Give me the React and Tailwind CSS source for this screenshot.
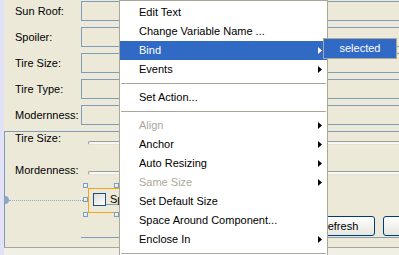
import React from 'react';

const fields = ['Sun Roof:', 'Spoiler:', 'Tire Size:', 'Tire Type:', 'Modernness:'];

const menuItems = [
  { label: 'Edit Text' },
  { label: 'Change Variable Name ...' },
  { label: 'Bind', sub: true, active: true },
  { label: 'Events', sub: true },
  { sep: true },
  { label: 'Set Action...' },
  { sep: true },
  { label: 'Align', sub: true, disabled: true },
  { label: 'Anchor', sub: true },
  { label: 'Auto Resizing', sub: true },
  { label: 'Same Size', sub: true, disabled: true },
  { label: 'Set Default Size' },
  { label: 'Space Around Component...' },
  { label: 'Enclose In', sub: true },
  { sep: true },
];

const Arrow = ({ white }) => (
  <svg width="4" height="7" viewBox="0 0 4 7" className="shrink-0">
    <polygon points="0,0 4,3.5 0,7" fill={white ? '#ffffff' : '#000000'} />
  </svg>
);

const Handle = ({ className }) => (
  <div
    className={`absolute w-[5px] h-[5px] border border-[#7F9DB9] bg-linear-to-br from-white to-[#D6DDE8] ${className}`}
  ></div>
);

const Groove = () => (
  <div className="w-[340px] shrink-0 h-[4px] border-t border-l border-[#9C9C9C] border-b border-b-[#E4E2D8] rounded-l-[2px] bg-[#F8F8F6]"></div>
);

const App = () => {
  return (
    <div className="relative w-[399px] h-[255px] overflow-hidden bg-[#ECE9D8] text-[11px] text-black font-['Liberation_Sans',Arial,sans-serif] flex">
      {/* left strip */}
      <div className="w-[4px] shrink-0 bg-[#E1E1F8]"></div>

      <div className="flex-1 flex flex-col overflow-hidden">
        {/* top form fields */}
        <div className="flex flex-col gap-[6px] pt-[1px]">
          {fields.map((f) => (
            <div key={f} className="flex items-center h-[20px]">
              <div className="w-[77px] shrink-0 pl-[11px] leading-[13px]">{f}</div>
              <div className="w-[340px] shrink-0 h-[20px] border border-[#7F9DB9]"></div>
            </div>
          ))}
        </div>

        {/* lower panel */}
        <div className="mt-[6px] h-[116px] shrink-0 border-t border-l border-[#7F9DB9] flex flex-col">
          <div className="flex items-start h-[16px]">
            <div className="w-[83px] shrink-0 pl-[10px] leading-[13px]">Tire Size:</div>
            <div className="mt-[9px]">
              <Groove />
            </div>
          </div>
          <div className="flex items-start h-[13px] mt-[16px]">
            <div className="w-[83px] shrink-0 pl-[10px] leading-[13px]">Mordenness:</div>
            <div className="mt-[7px]">
              <Groove />
            </div>
          </div>

          {/* selected component row */}
          <div className="flex items-center h-[33px] mt-[6px]">
            <div className="w-[4px] h-[8px] rounded-r-full bg-[#8FA8C8] shrink-0"></div>
            <div className="w-[74px] shrink-0 border-t border-dotted border-[#8FA8C8] mt-[1px]"></div>
            <div className="relative w-[36px] h-[34px] shrink-0 overflow-hidden">
              <div className="absolute left-[5px] top-[5px] w-[40px] h-[25px] border border-[#F9A21B]"></div>
              <div className="absolute left-[17px] top-[21px] w-[30px] h-[1px] bg-[#7F9DB9]"></div>
              <div className="absolute left-[10px] top-[10px] w-[13px] h-[13px] border border-[#1C5180] bg-linear-to-br from-[#DCDCD7] to-white"></div>
              <div className="absolute left-[27px] top-[10px] leading-[13px] whitespace-nowrap">Sp</div>
              <Handle className="left-0 top-0" />
              <Handle className="left-0 top-[14px]" />
              <Handle className="left-0 top-[29px]" />
              <Handle className="left-[31px] top-0" />
              <Handle className="left-[31px] top-[29px]" />
            </div>
          </div>

          {/* buttons */}
          <div className="flex gap-[8px] pl-[298px] h-[20px]">
            <button className="w-[72px] h-[20px] shrink-0 border border-[#003C74] rounded-[3px] bg-linear-to-b from-white to-[#E6E5DE] leading-[13px]">
              Refresh
            </button>
            <button className="w-[72px] h-[20px] shrink-0 border border-[#003C74] rounded-[3px] bg-linear-to-b from-white to-[#E6E5DE]"></button>
          </div>
          <div className="ml-[76px] h-[1px] bg-[#7F9DB9] mt-[1px]"></div>
        </div>

        {/* bottom strip */}
        <div className="flex-1 border-t border-[#A8A69C] bg-[#F2F0E6]"></div>
      </div>

      {/* context menu */}
      <div className="absolute left-[119px] top-0 w-[209px] border border-[#ACA899] bg-white pt-[2px]">
        {menuItems.map((item, i) =>
          item.sep ? (
            <div key={i} className="h-[9px] flex items-center px-[1px]">
              <div className="h-[1px] w-full bg-[#ACA899]"></div>
            </div>
          ) : (
            <div
              key={i}
              className={`h-[19px] flex items-center justify-between pl-[19px] pr-[5px] leading-[13px] whitespace-nowrap ${
                item.active ? 'bg-[#316AC5] text-white' : item.disabled ? 'text-[#ACA899]' : 'text-black'
              }`}
            >
              <span>{item.label}</span>
              {item.sub && <Arrow white={item.active} />}
            </div>
          )
        )}
      </div>

      {/* submenu */}
      <div className="absolute left-[323px] top-[38px] w-[74px] h-[21px] border border-[#ACA899] bg-[#316AC5] text-white flex items-center justify-center leading-[13px]">
        selected
      </div>
    </div>
  );
};

export default App;
